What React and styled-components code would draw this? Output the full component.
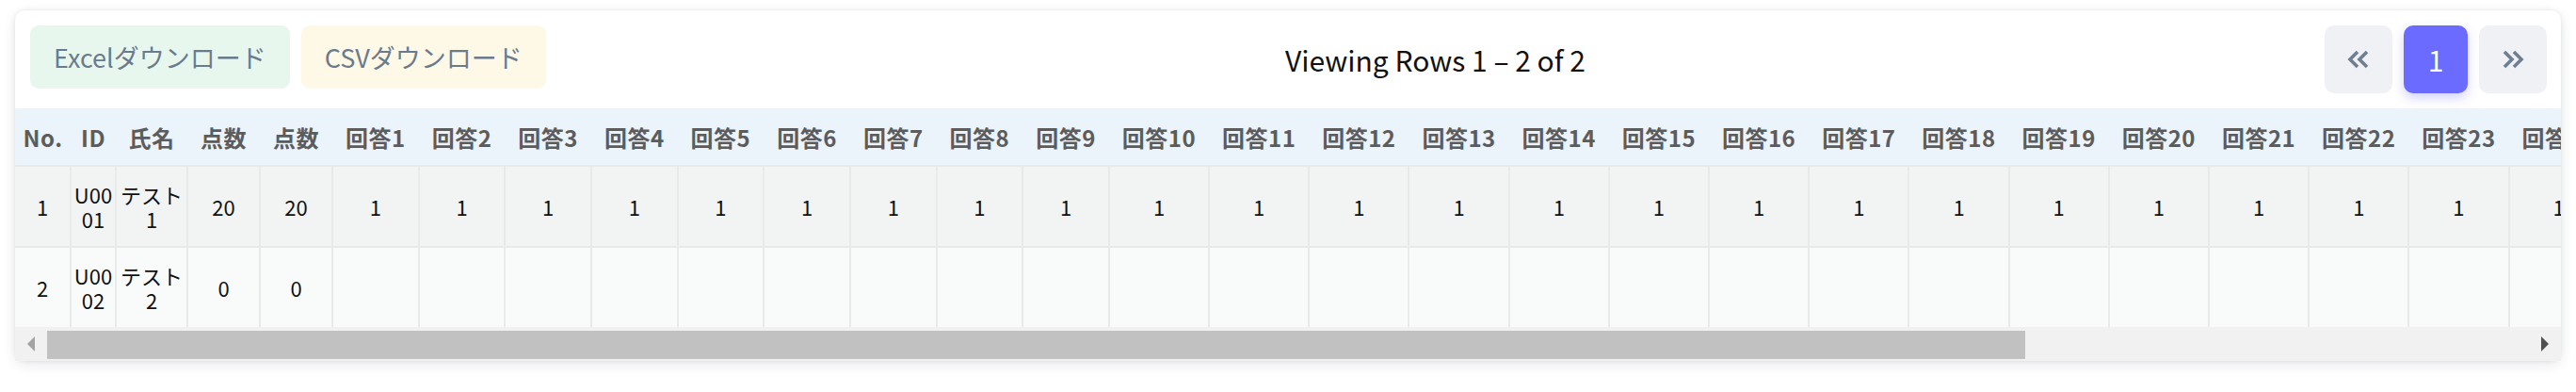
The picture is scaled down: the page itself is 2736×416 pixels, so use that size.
import React, { useLayoutEffect, useRef, useState } from "react";
import styled, { createGlobalStyle } from "styled-components";

const GlobalStyle = createGlobalStyle`
  html, body { margin: 0; padding: 0; background: #ffffff; }
  body {
    font-family: "Noto Sans CJK JP", "Noto Sans", sans-serif;
    -webkit-font-smoothing: antialiased;
  }
`;

const Page = styled.div`
  padding: 11px 16px 33px;
`;

const Card = styled.section`
  background: #ffffff;
  border-radius: 10px;
  box-shadow: 0 4px 14px rgba(20, 30, 50, 0.1), 0 0 4px rgba(20, 30, 50, 0.08);
`;

const Toolbar = styled.div`
  display: flex;
  align-items: center;
  padding: 16px 15px 16px 16px;
`;

const DownloadGroup = styled.div`
  display: flex;
  gap: 12px;
  align-self: flex-start;
`;

const DownloadButton = styled.button`
  height: 67px;
  padding: 0 25px;
  border: none;
  border-radius: 9px;
  background: ${(p) => (p.$tone === "excel" ? "#e8f7ee" : "#fef8e6")};
  color: #6b7b8e;
  font-family: inherit;
  font-size: 27px;
  font-weight: 400;
  cursor: pointer;
`;

const Info = styled.div`
  flex: 1;
  text-align: center;
  font-size: 30px;
  color: #111111;
`;

const Pager = styled.nav`
  display: flex;
  gap: 12px;
`;

const PageButton = styled.button`
  width: ${(p) => p.$w}px;
  height: 72px;
  border: none;
  border-radius: 10px;
  display: flex;
  align-items: center;
  justify-content: center;
  background: ${(p) => (p.$active ? "#6b6bff" : "#f0f1f4")};
  color: ${(p) => (p.$active ? "#ffffff" : "#6e7f92")};
  box-shadow: ${(p) => (p.$active ? "0 5px 12px rgba(107, 107, 255, 0.3)" : "none")};
  font-family: inherit;
  font-size: 30px;
  padding: 0;
  cursor: pointer;
`;

const TableViewport = styled.div`
  overflow: hidden;
`;

const Table = styled.table`
  table-layout: fixed;
  border-collapse: collapse;
  width: ${(p) => p.$width}px;
`;

const Col = styled.col`
  width: ${(p) => p.$w}px;
`;

const HeadRow = styled.tr`
  background: #ebf3fb;
`;

const Th = styled.th`
  height: 60px;
  padding: 0;
  white-space: nowrap;
  overflow: hidden;
  text-align: center;
  vertical-align: middle;
  font-size: 24px;
  font-weight: 700;
  letter-spacing: 0.5px;
  color: #5c5c5c;
`;

const BodyRow = styled.tr`
  background: ${(p) => (p.$odd ? "#f2f3f3" : "#f9fbfb")};
`;

const Td = styled.td`
  padding: 16px 2px;
  border: 2px solid #e8eaea;
  border-bottom: none;
  text-align: center;
  vertical-align: middle;
  font-size: 22px;
  line-height: 26px;
  color: #111111;
  word-break: break-all;

  &:first-child {
    border-left: none;
  }
`;

const ScrollBar = styled.div`
  display: flex;
  height: 36px;
  background: #f1f1f1;
`;

const ScrollArrow = styled.div`
  flex: 0 0 34px;
  display: flex;
  align-items: center;
  justify-content: ${(p) => (p.$dir === "left" ? "flex-start" : "flex-end")};
  padding: 0 13px;
  box-sizing: border-box;
  color: ${(p) => (p.$dir === "left" ? "#a3a3a3" : "#505050")};
`;

const ScrollTrack = styled.div`
  flex: 1;
  display: flex;
  padding: 4px 0 2px;
`;

const ScrollThumb = styled.div`
  background: #c1c1c1;
`;

const Triangle = ({ dir }) => (
  <svg width="8" height="16" viewBox="0 0 8 16" aria-hidden="true">
    <polygon points={dir === "left" ? "8,0 0,8 8,16" : "0,0 8,8 0,16"} fill="currentColor" />
  </svg>
);

const ChevronIcon = ({ dir }) => (
  <svg width="24" height="20" viewBox="0 0 24 20" aria-hidden="true">
    <g
      fill="none"
      stroke="currentColor"
      strokeWidth="3.6"
      strokeLinejoin="miter"
      transform={dir === "right" ? "translate(24 0) scale(-1 1)" : undefined}
    >
      <polyline points="11,2 3,10 11,18" />
      <polyline points="21,2 13,10 21,18" />
    </g>
  </svg>
);

const columns = [
  { key: "no", label: "No.", w: 59 },
  { key: "id", label: "ID", w: 48 },
  { key: "name", label: "氏名", w: 76 },
  { key: "score", label: "点数", w: 77 },
  { key: "score2", label: "点数", w: 77 },
  ...Array.from({ length: 30 }, (_, i) => ({
    key: `a${i + 1}`,
    label: `回答${i + 1}`,
    w: i < 9 ? 91.67 : 106.2,
  })),
];

const rows = [
  {
    no: 1,
    id: "U0001",
    name: "テスト1",
    score: 20,
    score2: 20,
    ...Object.fromEntries(Array.from({ length: 30 }, (_, i) => [`a${i + 1}`, 1])),
  },
  {
    no: 2,
    id: "U0002",
    name: "テスト2",
    score: 0,
    score2: 0,
  },
];

const tableWidth = columns.reduce((s, c) => s + c.w, 0);

export default function App() {
  const viewportRef = useRef(null);
  const [ratio, setRatio] = useState(0.8);

  useLayoutEffect(() => {
    const el = viewportRef.current;
    if (el) setRatio(Math.min(1, el.clientWidth / el.scrollWidth));
  }, []);

  return (
    <>
      <GlobalStyle />
      <Page>
        <Card>
          <Toolbar>
            <DownloadGroup>
              <DownloadButton $tone="excel">Excelダウンロード</DownloadButton>
              <DownloadButton $tone="csv">CSVダウンロード</DownloadButton>
            </DownloadGroup>
            <Info>Viewing Rows 1 – 2 of 2</Info>
            <Pager>
              <PageButton $w={72} aria-label="前へ">
                <ChevronIcon dir="left" />
              </PageButton>
              <PageButton $w={68} $active>
                1
              </PageButton>
              <PageButton $w={72} aria-label="次へ">
                <ChevronIcon dir="right" />
              </PageButton>
            </Pager>
          </Toolbar>
          <TableViewport ref={viewportRef}>
            <Table $width={tableWidth}>
              <colgroup>
                {columns.map((c) => (
                  <Col key={c.key} $w={c.w} />
                ))}
              </colgroup>
              <thead>
                <HeadRow>
                  {columns.map((c) => (
                    <Th key={c.key}>{c.label}</Th>
                  ))}
                </HeadRow>
              </thead>
              <tbody>
                {rows.map((r, i) => (
                  <BodyRow key={r.no} $odd={i % 2 === 0}>
                    {columns.map((c) => (
                      <Td key={c.key}>{r[c.key] ?? ""}</Td>
                    ))}
                  </BodyRow>
                ))}
              </tbody>
            </Table>
          </TableViewport>
          <ScrollBar>
            <ScrollArrow $dir="left">
              <Triangle dir="left" />
            </ScrollArrow>
            <ScrollTrack>
              <ScrollThumb style={{ width: `${ratio * 100}%` }} />
            </ScrollTrack>
            <ScrollArrow $dir="right">
              <Triangle dir="right" />
            </ScrollArrow>
          </ScrollBar>
        </Card>
      </Page>
    </>
  );
}
